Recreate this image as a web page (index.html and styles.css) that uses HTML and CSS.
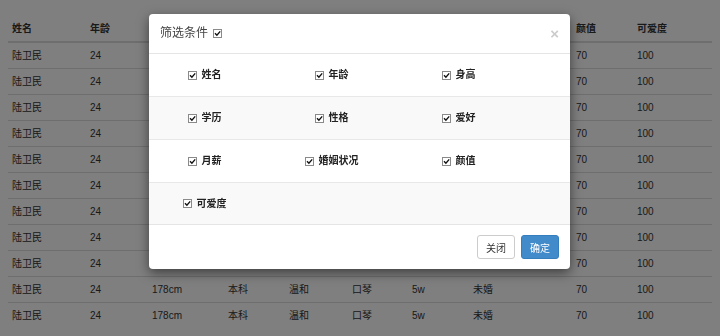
FILE: index.html
```html
<!DOCTYPE html>
<html lang="zh-CN">
<head>
<meta charset="UTF-8">
<meta name="viewport" content="width=device-width, initial-scale=1.0">
<title>筛选条件</title>
<link rel="stylesheet" href="styles.css">
</head>
<body>
<div class="page">
    <table class="data-table">
        <colgroup>
            <col class="c1"><col class="c2"><col class="c3"><col class="c4"><col class="c5">
            <col class="c6"><col class="c7"><col class="c8"><col class="c9"><col class="c10">
        </colgroup>
        <thead>
            <tr><th>姓名</th><th>年龄</th><th>身高</th><th>学历</th><th>性格</th><th>爱好</th><th>月薪</th><th>婚姻状况</th><th>颜值</th><th>可爱度</th></tr>
        </thead>
        <tbody>
            <tr><td>陆卫民</td><td>24</td><td>178cm</td><td>本科</td><td>温和</td><td>口琴</td><td>5w</td><td>未婚</td><td>70</td><td>100</td></tr>
            <tr><td>陆卫民</td><td>24</td><td>178cm</td><td>本科</td><td>温和</td><td>口琴</td><td>5w</td><td>未婚</td><td>70</td><td>100</td></tr>
            <tr><td>陆卫民</td><td>24</td><td>178cm</td><td>本科</td><td>温和</td><td>口琴</td><td>5w</td><td>未婚</td><td>70</td><td>100</td></tr>
            <tr><td>陆卫民</td><td>24</td><td>178cm</td><td>本科</td><td>温和</td><td>口琴</td><td>5w</td><td>未婚</td><td>70</td><td>100</td></tr>
            <tr><td>陆卫民</td><td>24</td><td>178cm</td><td>本科</td><td>温和</td><td>口琴</td><td>5w</td><td>未婚</td><td>70</td><td>100</td></tr>
            <tr><td>陆卫民</td><td>24</td><td>178cm</td><td>本科</td><td>温和</td><td>口琴</td><td>5w</td><td>未婚</td><td>70</td><td>100</td></tr>
            <tr><td>陆卫民</td><td>24</td><td>178cm</td><td>本科</td><td>温和</td><td>口琴</td><td>5w</td><td>未婚</td><td>70</td><td>100</td></tr>
            <tr><td>陆卫民</td><td>24</td><td>178cm</td><td>本科</td><td>温和</td><td>口琴</td><td>5w</td><td>未婚</td><td>70</td><td>100</td></tr>
            <tr><td>陆卫民</td><td>24</td><td>178cm</td><td>本科</td><td>温和</td><td>口琴</td><td>5w</td><td>未婚</td><td>70</td><td>100</td></tr>
            <tr><td>陆卫民</td><td>24</td><td>178cm</td><td>本科</td><td>温和</td><td>口琴</td><td>5w</td><td>未婚</td><td>70</td><td>100</td></tr>
            <tr><td>陆卫民</td><td>24</td><td>178cm</td><td>本科</td><td>温和</td><td>口琴</td><td>5w</td><td>未婚</td><td>70</td><td>100</td></tr>
        </tbody>
    </table>
</div>

<div class="modal-backdrop"></div>

<div class="modal">
    <div class="modal-header">
        <span class="modal-title">筛选条件</span>
        <svg class="cb" viewBox="0 0 9 9"><rect x=".5" y=".5" width="8" height="8" fill="#fff" stroke="#8a8a8a"/><path d="M2 4.3l1.9 1.9L7.2 2.4" fill="none" stroke="#111" stroke-width="1.4"/></svg>
        <span class="close">&times;</span>
    </div>
    <div class="modal-body">
        <div class="filter-row">
            <label class="item"><svg class="cb" viewBox="0 0 9 9"><rect x=".5" y=".5" width="8" height="8" fill="#fff" stroke="#8a8a8a"/><path d="M2 4.3l1.9 1.9L7.2 2.4" fill="none" stroke="#111" stroke-width="1.4"/></svg><span>姓名</span></label>
            <label class="item"><svg class="cb" viewBox="0 0 9 9"><rect x=".5" y=".5" width="8" height="8" fill="#fff" stroke="#8a8a8a"/><path d="M2 4.3l1.9 1.9L7.2 2.4" fill="none" stroke="#111" stroke-width="1.4"/></svg><span>年龄</span></label>
            <label class="item"><svg class="cb" viewBox="0 0 9 9"><rect x=".5" y=".5" width="8" height="8" fill="#fff" stroke="#8a8a8a"/><path d="M2 4.3l1.9 1.9L7.2 2.4" fill="none" stroke="#111" stroke-width="1.4"/></svg><span>身高</span></label>
        </div>
        <div class="filter-row">
            <label class="item"><svg class="cb" viewBox="0 0 9 9"><rect x=".5" y=".5" width="8" height="8" fill="#fff" stroke="#8a8a8a"/><path d="M2 4.3l1.9 1.9L7.2 2.4" fill="none" stroke="#111" stroke-width="1.4"/></svg><span>学历</span></label>
            <label class="item"><svg class="cb" viewBox="0 0 9 9"><rect x=".5" y=".5" width="8" height="8" fill="#fff" stroke="#8a8a8a"/><path d="M2 4.3l1.9 1.9L7.2 2.4" fill="none" stroke="#111" stroke-width="1.4"/></svg><span>性格</span></label>
            <label class="item"><svg class="cb" viewBox="0 0 9 9"><rect x=".5" y=".5" width="8" height="8" fill="#fff" stroke="#8a8a8a"/><path d="M2 4.3l1.9 1.9L7.2 2.4" fill="none" stroke="#111" stroke-width="1.4"/></svg><span>爱好</span></label>
        </div>
        <div class="filter-row">
            <label class="item"><svg class="cb" viewBox="0 0 9 9"><rect x=".5" y=".5" width="8" height="8" fill="#fff" stroke="#8a8a8a"/><path d="M2 4.3l1.9 1.9L7.2 2.4" fill="none" stroke="#111" stroke-width="1.4"/></svg><span>月薪</span></label>
            <label class="item"><svg class="cb" viewBox="0 0 9 9"><rect x=".5" y=".5" width="8" height="8" fill="#fff" stroke="#8a8a8a"/><path d="M2 4.3l1.9 1.9L7.2 2.4" fill="none" stroke="#111" stroke-width="1.4"/></svg><span>婚姻状况</span></label>
            <label class="item"><svg class="cb" viewBox="0 0 9 9"><rect x=".5" y=".5" width="8" height="8" fill="#fff" stroke="#8a8a8a"/><path d="M2 4.3l1.9 1.9L7.2 2.4" fill="none" stroke="#111" stroke-width="1.4"/></svg><span>颜值</span></label>
        </div>
        <div class="filter-row">
            <label class="item"><svg class="cb" viewBox="0 0 9 9"><rect x=".5" y=".5" width="8" height="8" fill="#fff" stroke="#8a8a8a"/><path d="M2 4.3l1.9 1.9L7.2 2.4" fill="none" stroke="#111" stroke-width="1.4"/></svg><span>可爱度</span></label>
        </div>
    </div>
    <div class="modal-footer">
        <button class="btn btn-default">关闭</button>
        <button class="btn btn-primary">确定</button>
    </div>
</div>
</body>
</html>
```

FILE: styles.css
```css
body {
    margin: 0;
    font-family: "Liberation Sans", "Noto Sans CJK SC", sans-serif;
    font-size: 10px;
    color: #333;
    background: #fff;
}

.page {
    padding: 16px 8px 0;
}

.data-table {
    width: 704px;
    border-collapse: collapse;
    table-layout: fixed;
}
.data-table .c1 { width: 78px; }
.data-table .c2 { width: 62px; }
.data-table .c3 { width: 76px; }
.data-table .c4 { width: 61px; }
.data-table .c5 { width: 63px; }
.data-table .c6 { width: 60px; }
.data-table .c7 { width: 61px; }
.data-table .c8 { width: 103px; }
.data-table .c9 { width: 61px; }
.data-table .c10 { width: 79px; }

.data-table th,
.data-table td {
    text-align: left;
    padding: 6px 4px;
    line-height: 13px;
    white-space: nowrap;
}
.data-table th {
    font-weight: bold;
    border-bottom: 2px solid #ddd;
}
.data-table td {
    border-top: 1px solid #ddd;
}

.modal-backdrop {
    position: fixed;
    top: 0;
    left: 0;
    right: 0;
    bottom: 0;
    background: rgba(0, 0, 0, 0.5);
}

.modal {
    position: absolute;
    top: 14px;
    left: 149px;
    width: 421px;
    background: #fff;
    border-radius: 4px;
    box-shadow: 0 4px 12px rgba(0, 0, 0, 0.5);
    overflow: hidden;
}

.modal-header {
    display: flex;
    align-items: center;
    gap: 5px;
    padding: 11px 11px;
    border-bottom: 1px solid #e5e5e5;
}
.modal-title {
    font-size: 12px;
    line-height: 17px;
    color: #444;
}
.close {
    margin-left: auto;
    font-size: 15px;
    font-weight: bold;
    line-height: 17px;
    color: #ccc;
}

.cb {
    width: 9px;
    height: 9px;
    flex: none;
}

.filter-row {
    display: grid;
    grid-template-columns: repeat(3, 127px);
    margin-left: -8px;
    height: 42px;
    align-items: center;
    border-bottom: 1px solid #e8e8e8;
}
.filter-row:nth-child(even) {
    background: #f9f9f9;
}
.filter-row:last-child {
    height: 41px;
    border-bottom: none;
}

.item {
    display: flex;
    justify-content: center;
    align-items: center;
    gap: 5px;
    font-weight: bold;
    line-height: 14px;
    color: #222;
}

.modal-footer {
    display: flex;
    justify-content: flex-end;
    gap: 6px;
    padding: 10px 11px;
    border-top: 1px solid #e5e5e5;
}

.btn {
    width: 38px;
    height: 24px;
    padding: 0;
    font-family: "Liberation Sans", "Noto Sans CJK SC", sans-serif;
    font-size: 10px;
    border: 1px solid #ccc;
    border-radius: 3px;
}
.btn-default {
    background: #fff;
    color: #333;
}
.btn-primary {
    background: #428bca;
    border-color: #357ebd;
    color: #fff;
}
```
